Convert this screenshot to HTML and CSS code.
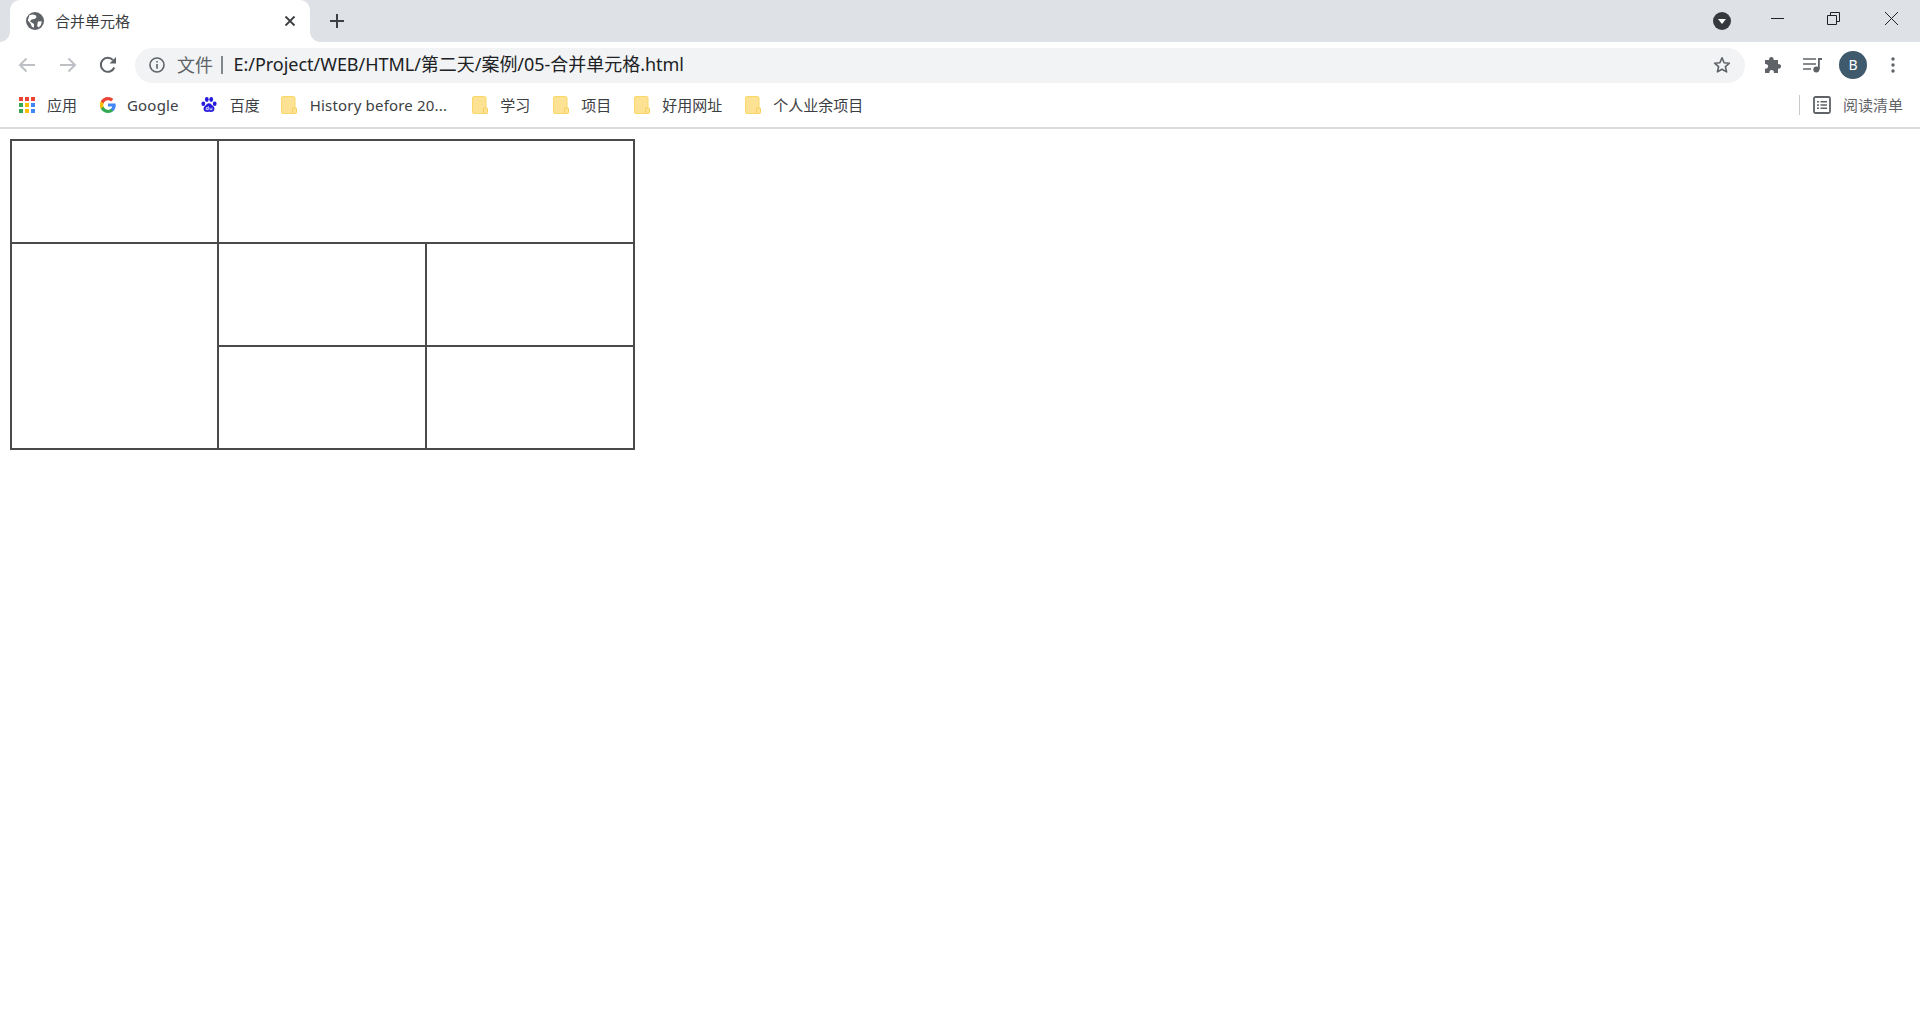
FILE: index.html
```html
<!DOCTYPE html>
<html lang="zh-CN">
<head>
<meta charset="utf-8">
<title>合并单元格</title>
<link rel="stylesheet" href="styles.css">
</head>
<body>
<header class="chrome">
  <div class="tabstrip">
    <div class="tab">
      <svg class="tab-favicon" viewBox="0 0 18 18"><circle cx="9" cy="9" r="9" fill="#5f6368"/><path d="M3.500 3 7 2.500l3 1 .5 2-2 1.500-3 .5L4 9.500l2.500 1.500 1.500 1v3.500L6 15 4.500 11.500 1.800 8.500zM12 9.500l3.800-.3L15 13l-2.500 2.500-1.300-1.500.3-2.500z" fill="#fff"/></svg>
      <span class="tab-title">合并单元格</span>
      <svg class="tab-close" viewBox="0 0 12 12"><path d="M1.500 1.500l9 9M10.500 1.500l-9 9" stroke="#3c4043" stroke-width="1.800" fill="none"/></svg>
    </div>
    <svg class="new-tab" viewBox="0 0 14 14"><path d="M7 0v14M0 7h14" stroke="#3c4043" stroke-width="2" fill="none"/></svg>
    <div class="window-controls">
      <svg class="tab-search" viewBox="0 0 18 18"><circle cx="9" cy="9" r="9" fill="#35393d"/><path d="M5 7h8l-4 5z" fill="#fff"/></svg>
      <svg class="win win-min" viewBox="0 0 13 13"><path d="M0 6.500h13" stroke="#202124" stroke-width="1" fill="none"/></svg>
      <svg class="win win-restore" viewBox="0 0 13 13"><path d="M.5 3.500h9v9h-9zM3.500 3.500v-3h9v9h-3" stroke="#202124" stroke-width="1" fill="none"/></svg>
      <svg class="win win-close" viewBox="0 0 13 13"><path d="M0 0l13 13M13 0L0 13" stroke="#202124" stroke-width="1" fill="none"/></svg>
    </div>
  </div>
  <div class="toolbar">
    <svg class="nav nav-back" viewBox="0 0 18 16"><path d="M17 8H2M8.500 1.500 2 8l6.500 6.500" stroke="#bdc1c6" stroke-width="2" fill="none"/></svg>
    <svg class="nav nav-forward" viewBox="0 0 18 16"><path d="M1 8h15M9.500 1.500 16 8l-6.500 6.500" stroke="#bdc1c6" stroke-width="2" fill="none"/></svg>
    <svg class="nav nav-reload" viewBox="0 0 18 18"><path d="M15.300 11.500A7 7 0 1 1 14 4.100" stroke="#5f6368" stroke-width="2" fill="none"/><path d="M17 1v6.500h-6.500z" fill="#5f6368"/></svg>
    <div class="omnibox">
      <svg class="info" viewBox="0 0 16 16"><circle cx="8" cy="8" r="7" stroke="#5f6368" stroke-width="1.600" fill="none"/><path d="M7.200 7h1.600v4.800H7.200zM7.200 4h1.600v1.600H7.200z" fill="#5f6368"/></svg>
      <span class="scheme">文件</span>
      <span class="sep"></span>
      <span class="url">E:/Project/WEB/HTML/第二天/案例/05-合并单元格.html</span>
      <svg class="star" viewBox="0 0 18 18"><path d="M9 1.800l2.100 4.900 5.300.5-4 3.500 1.200 5.200L9 13.200l-4.600 2.700 1.200-5.200-4-3.500 5.300-.5z" stroke="#5f6368" stroke-width="1.600" stroke-linejoin="round" fill="none"/></svg>
    </div>
    <svg class="puzzle" viewBox="0 0 18 18"><path d="M1 5h4.200a2.300 2.300 0 1 1 4.300 0H14v4.200a2.300 2.300 0 1 1 0 4.300V18H9.800a2.300 2.300 0 1 0-4.300 0H1v-4.500a2.300 2.300 0 1 0 0-4.300z" transform="translate(0 -1)" fill="#5f6368"/></svg>
    <svg class="media" viewBox="0 0 20 16"><path d="M0 2h13M0 7h13M0 12h8" stroke="#5f6368" stroke-width="1.600" fill="none"/><path d="M15 1h4v2h-2.200v9.500h-1.800z" fill="#5f6368"/><circle cx="13.300" cy="12.500" r="3" fill="#5f6368"/></svg>
    <div class="avatar">B</div>
    <svg class="dots" viewBox="0 0 4 16"><circle cx="2" cy="2" r="1.700" fill="#5f6368"/><circle cx="2" cy="8" r="1.700" fill="#5f6368"/><circle cx="2" cy="14" r="1.700" fill="#5f6368"/></svg>
  </div>
  <nav class="bookmarks">
    <a class="bm bm-apps">
      <svg class="bm-icon" viewBox="0 0 16 16">
        <rect x="0" y="0" width="4" height="4" fill="#ea4335"/><rect x="6" y="0" width="4" height="4" fill="#ea4335"/><rect x="12" y="0" width="4" height="4" fill="#ea4335"/>
        <rect x="0" y="6" width="4" height="4" fill="#34a853"/><rect x="6" y="6" width="4" height="4" fill="#fbbc04"/><rect x="12" y="6" width="4" height="4" fill="#4285f4"/>
        <rect x="0" y="12" width="4" height="4" fill="#34a853"/><rect x="6" y="12" width="4" height="4" fill="#fbbc04"/><rect x="12" y="12" width="4" height="4" fill="#4285f4"/>
      </svg>
      <span>应用</span>
    </a>
    <a class="bm bm-google">
      <svg class="bm-icon" viewBox="0 0 16 16">
        <path d="M15.700 8.200c0-.6-.1-1.100-.2-1.600H8v3h4.300c-.2 1-.7 1.800-1.600 2.400v2h2.600c1.500-1.400 2.400-3.400 2.400-5.800z" fill="#4285f4"/>
        <path d="M8 16c2.200 0 4-.7 5.300-1.900l-2.600-2c-.7.500-1.600.8-2.700.8-2.100 0-3.900-1.400-4.500-3.300H.8v2.100C2.100 14.300 4.900 16 8 16z" fill="#34a853"/>
        <path d="M3.500 9.600c-.3-1-.3-2.200 0-3.200V4.300H.8a8 8 0 0 0 0 7.400z" fill="#fbbc04"/>
        <path d="M8 3.200c1.200 0 2.200.4 3 1.200l2.300-2.300C11.900.8 10.100 0 8 0 4.900 0 2.100 1.700.8 4.300l2.700 2.100C4.100 4.500 5.900 3.200 8 3.200z" fill="#ea4335"/>
      </svg>
      <span class="latin">Google</span>
    </a>
    <a class="bm bm-baidu">
      <svg class="bm-icon" viewBox="0 0 16 16">
        <g fill="#2319dc">
          <ellipse cx="2.300" cy="6.800" rx="1.900" ry="2.300"/><ellipse cx="5.800" cy="2.500" rx="1.900" ry="2.400"/><ellipse cx="10.200" cy="2.500" rx="1.900" ry="2.400"/><ellipse cx="13.700" cy="6.800" rx="1.900" ry="2.300"/>
          <path d="M8 6.200c2 0 2.600 1.500 3.800 2.600 1.600 1.400 1.900 2.600 1.500 4-.5 2-2.500 2.400-5.300 2-2.800.4-4.800 0-5.300-2-.4-1.400-.1-2.600 1.500-4C5.400 7.700 6 6.200 8 6.200z"/>
        </g>
        <path d="M7.300 9.300v3.400H5.200v-2h2.100M9 10.700v2h2v-2" stroke="#fff" stroke-width=".8" fill="none"/>
      </svg>
      <span>百度</span>
    </a>
    <a class="bm bm-folder bm-history"><svg class="bm-icon" viewBox="0 0 16 18"><use href="#folder"/></svg><span class="latin">History before 20...</span></a>
    <a class="bm bm-folder"><svg class="bm-icon" viewBox="0 0 16 18"><use href="#folder"/></svg><span>学习</span></a>
    <a class="bm bm-folder"><svg class="bm-icon" viewBox="0 0 16 18"><use href="#folder"/></svg><span>项目</span></a>
    <a class="bm bm-folder"><svg class="bm-icon" viewBox="0 0 16 18"><use href="#folder"/></svg><span>好用网址</span></a>
    <a class="bm bm-folder"><svg class="bm-icon" viewBox="0 0 16 18"><use href="#folder"/></svg><span>个人业余项目</span></a>
    <div class="reading">
      <svg class="reading-icon" viewBox="0 0 18 18"><rect x="1" y="1" width="16" height="16" rx="1.500" stroke="#5f6368" stroke-width="1.800" fill="none"/><path d="M4 5h2v1.500H4zM7.500 5H14v1.500H7.500zM4 8.300h2v1.500H4zM7.500 8.300H14v1.500H7.500zM4 11.600h2v1.500H4zM7.500 11.600H14v1.500H7.500z" fill="#5f6368"/></svg>
      <span class="reading-label">阅读清单</span>
    </div>
  </nav>
  <svg class="defs" width="0" height="0"><defs><g id="folder"><rect x=".5" y=".5" width="13.500" height="17" rx="1.500" fill="#fde293" stroke="#f9d769"/><rect x="11.500" y="12" width="4" height="5.500" rx="1" fill="#fde293" stroke="#f5cf5c"/></g></defs></svg>
</header>
<main class="page">
  <table class="merged">
    <colgroup><col class="col-a"><col class="col-b"><col class="col-c"></colgroup>
    <tr><td></td><td colspan="2"></td></tr>
    <tr><td rowspan="2"></td><td></td><td></td></tr>
    <tr><td></td><td></td></tr>
  </table>
</main>
</body>
</html>
```
FILE: styles.css
```css
* { box-sizing: border-box; }
html, body { margin: 0; height: 100%; background: #fff; overflow: hidden; }
body { font-family: "Noto Sans", "Noto Sans CJK SC", sans-serif; color: #3c4043; }
svg { display: block; flex: none; }
.defs { position: absolute; }

.chrome { height: 129px; border-bottom: 2px solid #dadce0; }

.tabstrip { height: 42px; background: #dee1e6; display: flex; align-items: center; padding-left: 10px; }
.tab { position: relative; width: 300px; height: 42px; background: #fff; border-radius: 10px 10px 0 0; display: flex; align-items: center; padding: 0 14px 0 16px; }
.tab::before, .tab::after { content: ""; position: absolute; bottom: 0; width: 10px; height: 10px; }
.tab::before { left: -10px; background: radial-gradient(circle at 0 0, transparent 9.500px, #fff 10px); }
.tab::after { right: -10px; background: radial-gradient(circle at 100% 0, transparent 9.500px, #fff 10px); }
.tab-favicon { width: 18px; height: 18px; }
.tab-title { margin-left: 11px; font-size: 15px; line-height: 20px; color: #3c4043; flex: 1; }
.tab-close { width: 12px; height: 12px; }
.new-tab { width: 14px; height: 14px; margin-left: 20px; }
.window-controls { margin-left: auto; display: flex; align-items: center; height: 42px; }
.tab-search { width: 18px; height: 18px; margin-right: 40px; }
.win { width: 13px; height: 13px; margin-top: -5px; }
.win-min { margin-right: 43px; }
.win-restore { margin-right: 45px; }
.win-close { margin-right: 22px; }

.toolbar { height: 46px; display: flex; align-items: center; padding-left: 18px; }
.nav-back { width: 18px; height: 16px; }
.nav-forward { width: 18px; height: 16px; margin-left: 23px; }
.nav-reload { width: 18px; height: 18px; margin-left: 22px; }
.omnibox { width: 1610px; height: 35px; margin-left: 18px; background: #f1f3f4; border-radius: 18px; display: flex; align-items: center; padding: 0 14px 0 14px; }
.info { width: 16px; height: 16px; }
.scheme { margin-left: 12px; font-size: 18px; color: #5f6368; line-height: 24px; margin-bottom: 1px; }
.sep { width: 1.500px; height: 18px; background: #80868b; margin-left: 8px; }
.url { margin-left: 11px; margin-bottom: 2px; font-size: 18px; line-height: 24px; color: #202124; flex: 1; white-space: nowrap; letter-spacing: -0.03px; }
.star { width: 18px; height: 18px; }
.puzzle { width: 18px; height: 18px; margin-left: 19px; }
.media { width: 20px; height: 16px; margin-left: 21px; }
.avatar { width: 28px; height: 28px; margin-left: 16px; border-radius: 50%; background: #3f5a6c; color: #fff; font: 14px/28px "Noto Sans", sans-serif; text-align: center; }
.dots { width: 4px; height: 16px; margin-left: 24px; }

.bookmarks { height: 39px; display: flex; align-items: center; padding: 0 0 5px 19px; }
.bm { display: flex; align-items: center; margin-right: 22px; font-size: 15px; line-height: 20px; color: #3c4043; white-space: nowrap; }
.bm-icon { width: 16px; height: 16px; margin-right: 12px; }
.latin { letter-spacing: 0.18px; }
.bm-apps { margin-right: 23px; }
.bm-google .bm-icon { margin-right: 11px; }
.bm-baidu { margin-right: 21px; }
.bm-baidu .bm-icon { margin-right: 13px; }
.bm-folder .bm-icon { height: 18px; }
.bm-folder { margin-right: 23px; }
.bm-history { margin-right: 25px; }
.bm-history .bm-icon { margin-right: 13px; }
.reading { margin-left: auto; display: flex; align-items: center; height: 20px; border-left: 1px solid #c7c9cc; padding-left: 13px; padding-right: 17px; font-size: 15px; color: #5f6368; }
.reading-icon { width: 18px; height: 18px; margin-right: 12px; }
.reading-label { margin-bottom: 2px; }

.page { padding: 10px 10px 0; }
.merged { border-collapse: collapse; table-layout: fixed; width: 624px; }
.col-a { width: 207px; }
.col-b { width: 208px; }
.col-c { width: 208px; }
.merged td { height: 103px; border: 2px solid #4a4a4a; padding: 0; }
```
